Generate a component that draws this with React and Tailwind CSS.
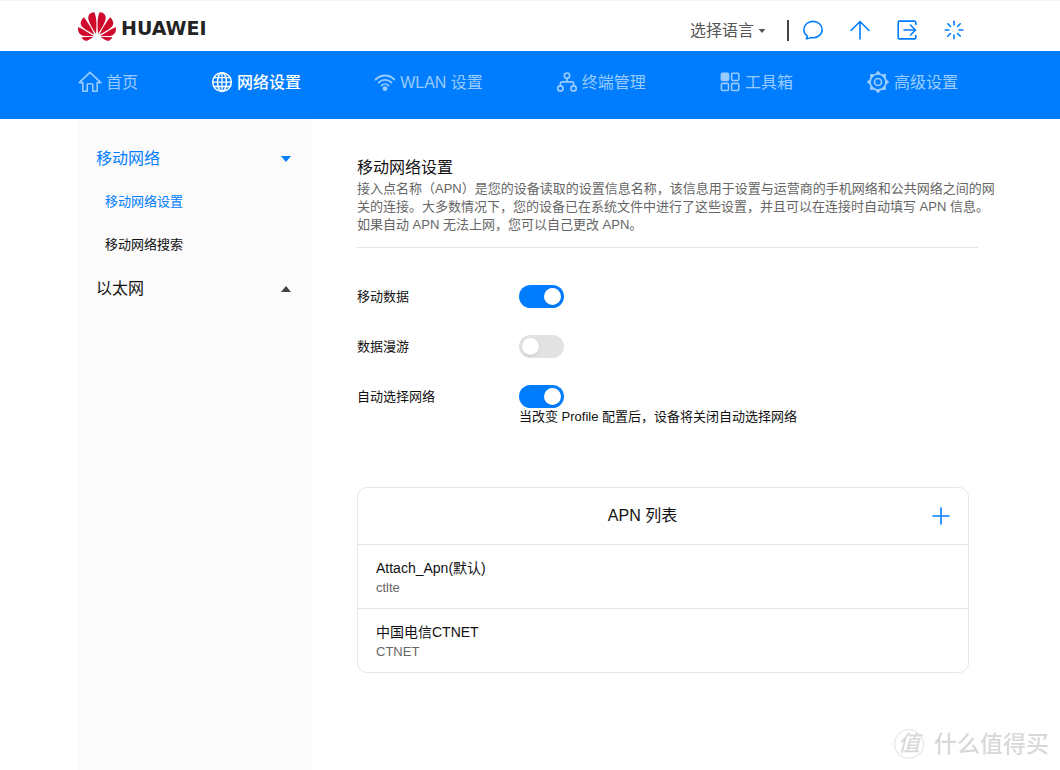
import { useState } from "react";

function Glyph({ children, className = "size-6", box = "0 0 24 24", width = 1.6 }) {
  return (
    <svg
      viewBox={box}
      className={`shrink-0 ${className}`}
      fill="none"
      stroke="currentColor"
      strokeWidth={width}
      strokeLinecap="round"
      strokeLinejoin="round"
      aria-hidden="true"
    >
      {children}
    </svg>
  );
}

function HomeIcon() {
  return (
    <Glyph>
      <path d="M1.2 11.6 12 1.4l10.8 10.2h-3.6v8.6h-4.4v-6.4a1 1 0 0 0-1-1h-3.6a1 1 0 0 0-1 1v6.4H4.8v-8.6z" />
    </Glyph>
  );
}

function GlobeIcon() {
  return (
    <Glyph width={1.7} className="size-[22px]" box="0 1 24 24">
      <circle cx="12" cy="12" r="10.2" />
      <ellipse cx="12" cy="12" rx="4.9" ry="10.2" />
      <path d="M12 1.8v20.4M3.2 7.2h17.6M3.2 16.8h17.6M1.8 12h20.4" strokeWidth="1.4" />
    </Glyph>
  );
}

function WifiIcon() {
  return (
    <Glyph className="size-[22px]" width={2} box="0 1 24 24">
      <path d="M1.8 9.2C7.6 3.4 16.4 3.4 22.2 9.2M5 12.6c4-3.9 10-3.9 14 0M8.2 15.8c2.2-2.1 5.4-2.1 7.6 0" />
      <circle cx="12" cy="19.2" r="1.6" fill="currentColor" />
    </Glyph>
  );
}

function DevicesIcon() {
  return (
    <Glyph className="size-[22px]" width={1.8} box="0 1 24 24">
      <circle cx="12" cy="5" r="2.9" />
      <circle cx="4.8" cy="19" r="2.9" />
      <circle cx="19.2" cy="19" r="2.9" />
      <path d="M12 7.9v3.8M4.8 16v-2.6a1.7 1.7 0 0 1 1.7-1.7h11a1.7 1.7 0 0 1 1.7 1.7V16" />
    </Glyph>
  );
}

function ToolsIcon() {
  return (
    <Glyph className="size-[22px]" width={1.7} box="0 1 24 24">
      <rect x="2.6" y="2.4" width="7.8" height="7.8" rx="1.4" fill="currentColor" />
      <rect x="13.8" y="2.4" width="7.8" height="7.8" rx="1.4" />
      <rect x="2.6" y="13.4" width="7.8" height="7.8" rx="1.4" />
      <rect x="13.8" y="13.4" width="7.8" height="7.8" rx="1.4" />
    </Glyph>
  );
}

function GearIcon() {
  const teeth = [0, 45, 90, 135, 180, 225, 270, 315];
  return (
    <Glyph width={1.7} box="0 1 24 24">
      <circle cx="12" cy="12" r="8" />
      <circle cx="12" cy="12" r="3.5" />
      {teeth.map((a) => (
        <path key={a} d="M10.4 3.9 12 1.9l1.6 2z" fill="currentColor" transform={`rotate(${a} 12 12)`} />
      ))}
    </Glyph>
  );
}

const NAV = [
  { label: "首页", Icon: HomeIcon },
  { label: "网络设置", Icon: GlobeIcon, active: true },
  { label: "WLAN 设置", Icon: WifiIcon },
  { label: "终端管理", Icon: DevicesIcon },
  { label: "工具箱", Icon: ToolsIcon },
  { label: "高级设置", Icon: GearIcon },
];

const APNS = [
  { name: "Attach_Apn(默认)", value: "ctlte" },
  { name: "中国电信CTNET", value: "CTNET" },
];

function Caret({ up = false, className }) {
  return (
    <svg viewBox="0 0 10 6" className={className} fill="currentColor" aria-hidden="true">
      <path d={up ? "M0 6 5 0l5 6z" : "M0 0h10L5 6z"} />
    </svg>
  );
}

function Logo() {
  return (
    <a href="#home" className="flex items-center gap-[5px] text-[#232323]">
      <svg viewBox="0 2.9 24 18.2" className="h-[29px] w-[38px]" fill="#cf0a2c" aria-hidden="true">
        <path d="M3.67 6.14S1.82 7.91 1.72 9.78v.35c.08 1.51 1.22 2.4 1.22 2.4 1.83 1.79 6.26 4.04 7.3 4.55 0 0 .06.03.1-.01l.02-.04v-.04C7.52 10.8 3.67 6.14 3.67 6.14zM9.65 18.6c-.02-.08-.1-.08-.1-.08l-7.38.26c.8 1.43 2.15 2.53 3.56 2.2.96-.25 3.16-1.78 3.88-2.3.06-.05.04-.09.04-.09zm.08-.78C6.49 15.63.21 12.28.21 12.28c-.15.46-.2.9-.21 1.3v.07c0 1.07.4 1.82.4 1.82.8 1.69 2.34 2.2 2.34 2.2.7.3 1.4.31 1.4.31.12.02 4.4 0 5.54 0 .05 0 .08-.05.08-.05v-.06c0-.03-.03-.05-.03-.05zM9.06 3.19a3.42 3.42 0 0 0-2.57 3.15v.41c.03.6.16 1.05.16 1.05.66 2.9 3.86 7.65 4.55 8.65.05.05.1.03.1.03a.1.1 0 0 0 .06-.1c1.06-10.6-1.11-13.42-1.11-13.42-.32.02-1.19.23-1.19.23zm8.3 2.27s-.49-1.8-2.44-2.28c0 0-.57-.14-1.17-.22 0 0-2.18 2.81-1.12 13.43.01.07.06.08.06.08.07.03.1-.03.1-.03.72-1.03 3.9-5.76 4.55-8.64 0 0 .36-1.4.02-2.34zm-2.92 13.07s-.07 0-.09.05c0 0-.01.07.03.1.7.51 2.85 2 3.88 2.3 0 0 .16.05.43.06h.14c.69-.02 1.9-.37 3-2.26l-7.4-.25zm7.83-8.41c.14-2.06-1.94-3.97-1.94-3.98 0 0-3.85 4.66-6.67 10.8 0 0-.03.08.02.13l.04.01h.06c1.06-.53 5.46-2.77 7.28-4.54 0 0 1.15-.93 1.21-2.42zm1.52 2.14s-6.28 3.37-9.52 5.55c0 0-.05.04-.03.11 0 0 .03.06.07.06 1.16 0 5.56 0 5.67-.02 0 0 .57-.02 1.27-.29 0 0 1.56-.5 2.37-2.27 0 0 .73-1.45.17-3.14z" />
      </svg>
      <span className="pt-1 font-['DejaVu_Sans',sans-serif] text-[19px] leading-6 font-bold">HUAWEI</span>
    </a>
  );
}

function TopBar() {
  const spokes = [0, 45, 90, 135, 180, 225, 270, 315];
  return (
    <header className="border-t border-[#f4f4f4]">
      <div className="mx-auto flex h-[50px] max-w-[904px] items-center justify-between pr-[18px]">
        <Logo />
        <div className="flex items-center">
          <div className="flex items-center pt-[10px] text-[#555]">
            <select aria-label="选择语言" className="w-[68px] appearance-none bg-transparent text-base outline-none">
              <option>选择语言</option>
            </select>
            <Caret className="h-1 w-2" />
          </div>
          <span className="mt-2 mr-[14px] ml-[21px] h-[21px] w-[2px] bg-[#444]" />
          <div className="flex items-center gap-[27px] pt-[7px] text-[#007dff]">
            <button type="button" aria-label="消息">
              <Glyph className="size-5" box="0 0 20 20">
                <path d="M4.4 16.2c-.1 1-.5 1.8-1.1 2.5 1.8.1 3.3-.3 4.4-1.2 6.2 1.2 11.4-2.6 11.4-7.9C19.1 5 15.1 1.4 10 1.4S.9 5 .9 9.600c0 2.700 1.300 5.100 3.500 6.600z" />
              </Glyph>
            </button>
            <button type="button" aria-label="更新">
              <Glyph className="size-5" box="0 0 20 20">
                <path d="M10 18.900V1.600M1 10.500l9-9 9 9" />
              </Glyph>
            </button>
            <button type="button" aria-label="退出">
              <Glyph className="size-5" box="0 0 20 20">
                <path d="M18.800 4.500V2.300a1.200 1.200 0 0 0-1.200-1.200H2.400a1.200 1.200 0 0 0-1.200 1.200v15.400a1.200 1.200 0 0 0 1.200 1.200h15.200a1.200 1.200 0 0 0 1.200-1.200v-2.200M7 10h11.300M13.500 5l5 5-5 5" />
              </Glyph>
            </button>
            <button type="button" aria-label="重启">
              <Glyph className="size-5" box="0 0 20 20">
                {spokes.map((a) => (
                  <path key={a} d="M10 1.200v3.800" transform={`rotate(${a} 10 10)`} />
                ))}
              </Glyph>
            </button>
          </div>
        </div>
      </div>
    </header>
  );
}

function NavBar() {
  return (
    <nav className="bg-[#007dff]">
      <ul className="mx-auto flex h-[68px] max-w-[904px] justify-between pt-5 pr-6">
        {NAV.map(({ label, Icon, active }) => (
          <li key={label}>
            <a
              href="#nav"
              className={`flex h-6 items-center gap-1 text-base whitespace-nowrap ${active ? "font-medium text-white" : "text-[#99cbff]"}`}
            >
              <Icon />
              {label}
            </a>
          </li>
        ))}
      </ul>
    </nav>
  );
}

function Sidebar() {
  return (
    <aside className="w-[234px] shrink-0 bg-[#fbfbfb] pt-[18px]">
      <button type="button" className="flex h-[43px] w-full items-center justify-between pr-[21px] pl-[18px] text-base text-[#007dff]">
        移动网络
        <Caret className="h-[6px] w-[10px]" />
      </button>
      <a href="#settings" className="flex h-[43px] items-center pl-[27px] text-[13px] text-[#007dff]">
        移动网络设置
      </a>
      <a href="#search" className="flex h-[43px] items-center pl-[27px] text-[13px]">
        移动网络搜索
      </a>
      <button type="button" className="flex h-[45px] w-full items-center justify-between pr-[21px] pl-[18px] text-base">
        以太网
        <Caret up className="h-[6px] w-[10px] text-[#444]" />
      </button>
    </aside>
  );
}

function ToggleRow({ id, label, initial, hint }) {
  const [on, setOn] = useState(initial);
  return (
    <div className="flex">
      <label htmlFor={id} className="w-[162px] shrink-0 leading-[26px]">
        {label}
      </label>
      <div>
        <div className="flex h-6 items-center">
          <input
            id={id}
            type="checkbox"
            role="switch"
            checked={on}
            onChange={(e) => setOn(e.target.checked)}
            className="flex h-[23px] w-[45px] cursor-pointer appearance-none items-center rounded-full bg-[#e2e2e2] px-[3px] before:size-[17px] before:rounded-full before:bg-white before:shadow before:content-[''] checked:justify-end checked:bg-[#007dff]"
          />
        </div>
        {hint && <p className="leading-[18px]">{hint}</p>}
      </div>
    </div>
  );
}

function ApnList() {
  return (
    <section className="mt-[61px] mr-[9px] rounded-[10px] border border-[#e6e6e6]">
      <div className="flex h-14 items-center pr-[18px]">
        <h2 className="flex-1 text-center text-base">APN 列表</h2>
        <button type="button" aria-label="添加 APN" className="flex w-[23px] justify-end text-[#007dff]">
          <Glyph className="size-[18px]" box="0 0 18 18">
            <path d="M9 1v16M1 9h16" />
          </Glyph>
        </button>
      </div>
      <ul>
        {APNS.map((apn) => (
          <li key={apn.name} className="border-t border-[#e6e6e6] px-[18px] pt-[13px] pb-[10px] leading-5">
            <p className="text-sm leading-5">{apn.name}</p>
            <p className="text-[#666]">{apn.value}</p>
          </li>
        ))}
      </ul>
    </section>
  );
}

function Watermark() {
  return (
    <div className="pointer-events-none fixed right-[11px] bottom-[10px] flex items-center gap-[10px] text-[#d8d8d8]">
      <span className="flex size-[30px] items-center justify-center rounded-full border border-[#e0e0e0] text-[22px] leading-none font-medium italic">
        值
      </span>
      <span className="text-[23px] leading-8 font-medium">什么值得买</span>
    </div>
  );
}

export default function App() {
  return (
    <div className="flex min-h-screen flex-col bg-white font-['Liberation_Sans','Noto_Sans_CJK_SC',sans-serif] text-[13px] text-[#111]">
      <TopBar />
      <NavBar />
      <div className="mx-auto flex w-full max-w-[904px] flex-1">
        <Sidebar />
        <main className="min-w-0 flex-1 pt-[37px] pr-1 pb-24 pl-[45px]">
          <h1 className="text-base leading-6">移动网络设置</h1>
          <p className="leading-[18px] text-[#666] lg:whitespace-nowrap">
            接入点名称（APN）是您的设备读取的设置信息名称，该信息用于设置与运营商的手机网络和公共网络之间的网
            <br className="hidden lg:inline" />
            关的连接。大多数情况下，您的设备已在系统文件中进行了这些设置，并且可以在连接时自动填写 APN 信息。
            <br className="hidden lg:inline" />
            如果自动 APN 无法上网，您可以自己更改 APN。
          </p>
          <hr className="mt-[13px] border-[#e6e6e6]" />
          <div className="mt-9 flex flex-col gap-6">
            <ToggleRow id="mobile-data" label="移动数据" initial={true} />
            <ToggleRow id="roaming" label="数据漫游" initial={false} />
            <ToggleRow
              id="auto-network"
              label="自动选择网络"
              initial={true}
              hint="当改变 Profile 配置后，设备将关闭自动选择网络"
            />
          </div>
          <ApnList />
        </main>
      </div>
      <Watermark />
    </div>
  );
}
